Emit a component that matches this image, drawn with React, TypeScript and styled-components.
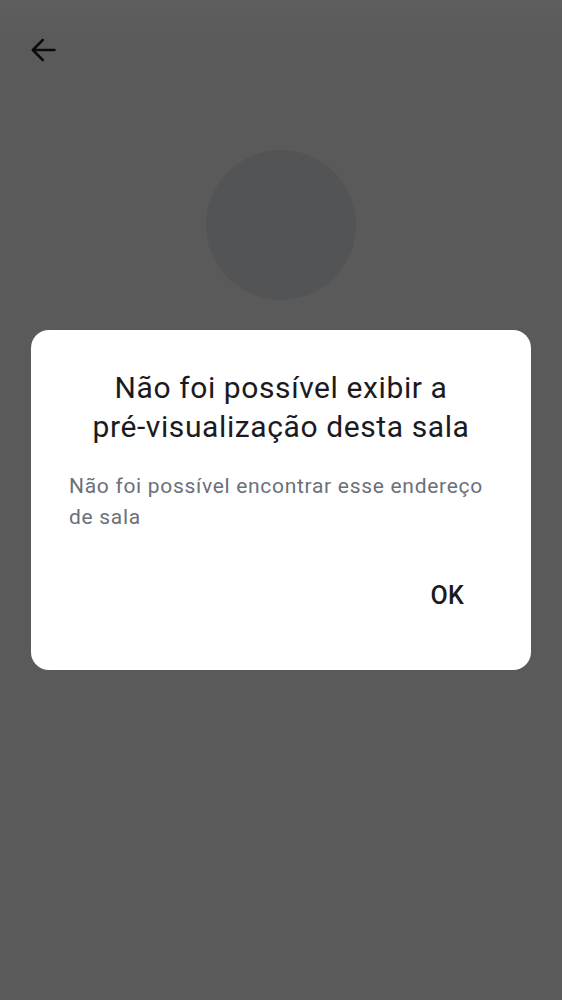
import styled, { createGlobalStyle } from "styled-components";

const GlobalStyle = createGlobalStyle`
  html, body {
    margin: 0;
    padding: 0;
  }
  body {
    font-family: Roboto, "Noto Sans", "Liberation Sans", sans-serif;
    background: #fcfcff;
  }
`;

function BackArrow() {
  return (
    <svg width="26" height="26" viewBox="0 0 26 26" fill="none">
      <path
        d="M24.5 13H2.8M12.8 3L2.8 13l10 10"
        stroke="currentColor"
        strokeWidth="2.5"
        strokeLinecap="round"
        strokeLinejoin="round"
      />
    </svg>
  );
}

export default function App() {
  return (
    <>
      <GlobalStyle />
      <Screen>
        <TopBar>
          <IconButton aria-label="Voltar">
            <BackArrow />
          </IconButton>
        </TopBar>
        <Avatar />
      </Screen>
      <Scrim>
        <Dialog role="alertdialog">
          <Title>
            Não foi possível exibir a <NoBreak>pré-visualização</NoBreak> desta
            sala
          </Title>
          <Message>Não foi possível encontrar esse endereço de sala</Message>
          <Actions>
            <TextButton>OK</TextButton>
          </Actions>
        </Dialog>
      </Scrim>
    </>
  );
}

const Screen = styled.div`
  height: 1000px;
  display: flex;
  flex-direction: column;
  align-items: center;
  background: #fcfcff;
`;

const TopBar = styled.div`
  align-self: stretch;
  height: 100px;
  padding: 37px 0 0 30px;
  box-sizing: border-box;
`;

const IconButton = styled.button`
  display: flex;
  padding: 0;
  border: none;
  background: none;
  color: #202020;
`;

const Avatar = styled.div`
  margin-top: 50px;
  width: 150px;
  height: 150px;
  border-radius: 50%;
  background: #e8eaee;
`;

const Scrim = styled.div`
  position: fixed;
  inset: 0;
  display: flex;
  justify-content: center;
  align-items: flex-start;
  padding-top: 330px;
  box-sizing: border-box;
  background: linear-gradient(
      to bottom,
      rgba(255, 255, 255, 0.03),
      rgba(255, 255, 255, 0) 40px
    ),
    rgba(0, 0, 0, 0.643);
`;

const Dialog = styled.div`
  width: 500px;
  height: 340px;
  box-sizing: border-box;
  border-radius: 18px;
  background: #ffffff;
  padding: 38px 38px 0;
  display: flex;
  flex-direction: column;
`;

const Title = styled.h2`
  margin: 0;
  font-size: 30px;
  line-height: 39px;
  font-weight: 400;
  letter-spacing: 0.6px;
  color: #1b1b1f;
  text-align: center;
`;

const NoBreak = styled.span`
  white-space: nowrap;
`;

const Message = styled.p`
  margin: 25px 0 0;
  font-size: 21px;
  line-height: 31px;
  letter-spacing: 0.7px;
  color: #6b7079;
`;

const Actions = styled.div`
  display: flex;
  justify-content: flex-end;
  margin-top: 42px;
`;

const TextButton = styled.button`
  border: none;
  background: none;
  padding: 8px 29px 8px 0;
  font-family: Roboto, "Noto Sans", "Liberation Sans", sans-serif;
  font-size: 25px;
  font-weight: 500;
  letter-spacing: 0.3px;
  color: #1b1b1f;
  line-height: 26px;
`;
